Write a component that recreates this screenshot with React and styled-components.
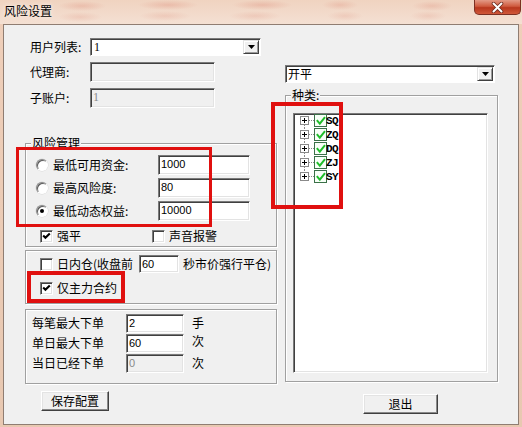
import React from 'react';
import styled, { createGlobalStyle } from 'styled-components';

const GlobalStyle = createGlobalStyle`
  *, *::before, *::after { box-sizing: border-box; }
  html, body { margin: 0; padding: 0; background: #fff; }
  body {
    font-family: "Noto Sans CJK SC", "Liberation Sans", sans-serif;
    font-size: 12px;
    color: #000;
  }
`;

const blob = (x, y, w, a) =>
  `radial-gradient(ellipse ${w}px 5px at ${x}px ${y}px, rgba(212, 104, 84, ${a}), transparent)`;

const Window = styled.div`
  position: relative;
  width: 522px;
  height: 427px;
  display: flex;
  flex-direction: column;
  background: linear-gradient(to bottom, #efcfba, #e8c8b1);
`;

const TitleBar = styled.div`
  height: 24px;
  flex-shrink: 0;
  display: flex;
  justify-content: space-between;
  align-items: flex-start;
  padding-left: 4px;
  background: ${[
    blob(82, 6, 24, 0.22),
    blob(80, 17, 22, 0.16),
    blob(168, 5, 30, 0.24),
    blob(165, 16, 26, 0.16),
    blob(262, 5, 30, 0.24),
    blob(255, 16, 26, 0.16),
    blob(340, 5, 18, 0.2),
    blob(345, 16, 18, 0.15),
    blob(432, 6, 20, 0.2),
    blob(428, 16, 18, 0.15),
  ].join(', ')}, linear-gradient(to bottom, #f0d3c0, #f4e0d3);
`;

const Title = styled.div`
  padding-top: 3px;
  line-height: 16px;
  font-size: 12px;
  text-shadow: 0 0 5px rgba(255, 255, 255, 0.9);
`;

const CloseButton = styled.div`
  width: 47px;
  height: 15px;
  margin-right: 1px;
  display: flex;
  align-items: center;
  justify-content: center;
  border: 1px solid #7c2f22;
  border-top: none;
  border-radius: 0 0 5px 5px;
  background: linear-gradient(to bottom, #e39a86 0%, #cf5a3e 45%, #b8371d 55%, #d0583a 100%);
`;

const Client = styled.div`
  flex: 1;
  margin: 0 3px 2px 3px;
  border: 1px solid #8f7d72;
  background: #f0f0f0;
  display: flex;
  gap: 7px;
  padding: 13px 0 0 21px;
`;

const Column = styled.div`
  width: ${p => p.$w}px;
  display: flex;
  flex-direction: column;
  align-items: flex-start;
`;

const Row = styled.div`
  display: flex;
  align-items: center;
  height: ${p => p.$h}px;
  margin-top: ${p => p.$mt || 0}px;
  padding-left: ${p => p.$pl || 0}px;
  flex-shrink: 0;
`;

const Label = styled.span`
  width: ${p => (p.$w ? `${p.$w}px` : 'auto')};
  padding-left: ${p => p.$pl || 0}px;
  margin-left: ${p => p.$ml || 0}px;
  line-height: 14px;
  white-space: nowrap;
  flex-shrink: 0;
`;

const TextBox = styled.div`
  width: ${p => p.$w}px;
  height: ${p => p.$h}px;
  margin-left: ${p => p.$ml || 0}px;
  flex-shrink: 0;
  background: ${p => (p.$disabled ? '#f0f0f0' : '#fff')};
  color: ${p => (p.$disabled ? '#8a8a8a' : '#000')};
  border: 1px solid;
  border-color: #7a7a7a #fff #fff #7a7a7a;
  box-shadow: inset 1px 1px 0 #404040, inset -1px -1px 0 #e3e3e3;
  font-family: ${p => (p.$serif ? '"Liberation Serif", serif' : '"Liberation Sans", sans-serif')};
  font-size: ${p => (p.$serif ? 12 : 11)}px;
  line-height: 13px;
  padding: 2px 0 0 2px;
`;

const Combo = styled.div`
  width: ${p => p.$w}px;
  height: 18px;
  margin: ${p => p.$m || 0};
  display: flex;
  background: #fff;
  border: 1px solid;
  border-color: #7a7a7a #fff #fff #7a7a7a;
  box-shadow: inset 1px 1px 0 #404040;
  flex-shrink: 0;
`;

const ComboText = styled.div`
  flex: 1;
  padding: 1px 0 0 ${p => p.$pl || 3}px;
  line-height: 14px;
  font-family: ${p => (p.$serif ? '"Liberation Serif", serif' : 'inherit')};
`;

const DropButton = styled.div`
  width: 16px;
  margin: 1px 1px 1px 0;
  display: flex;
  align-items: center;
  justify-content: center;
  background: #f0f0f0;
  border: 1px solid;
  border-color: #e3e3e3 #404040 #404040 #e3e3e3;
  box-shadow: inset 1px 1px 0 #fff, inset -1px -1px 0 #9a9a9a;
`;

const Frame = styled.div`
  width: ${p => (p.$w ? `${p.$w}px` : '100%')};
  height: ${p => p.$h}px;
  margin: ${p => p.$m || 0};
  display: flex;
  flex-direction: column;
  align-items: flex-start;
  border: 1px solid #a0a0a0;
  box-shadow: inset 1px 1px 0 #fff, 1px 1px 0 #fff;
  flex-shrink: 0;
`;

const Legend = styled.div`
  margin: -8px 0 0 5px;
  padding: 0 1px;
  height: 14px;
  line-height: 14px;
  background: #f0f0f0;
`;

const RadioDot = styled.span`
  position: relative;
  width: 12px;
  height: 12px;
  border-radius: 50%;
  background: #fff;
  border: 1px solid;
  border-color: #8a8a8a #fff #fff #8a8a8a;
  box-shadow: inset 1px 1px 0 #5a5a5a, 0 0 0 0.5px #d8d8d8;
  flex-shrink: 0;
  &::after {
    content: '';
    display: ${p => (p.$on ? 'block' : 'none')};
    position: absolute;
    left: 3px;
    top: 3px;
    width: 4px;
    height: 4px;
    border-radius: 50%;
    background: #000;
  }
`;

const CheckBox = styled.span`
  width: 13px;
  height: 13px;
  display: flex;
  align-items: center;
  justify-content: center;
  background: #fff;
  border: 1px solid;
  border-color: #7a7a7a #fff #fff #7a7a7a;
  box-shadow: inset 1px 1px 0 #404040, inset -1px -1px 0 #e3e3e3;
  flex-shrink: 0;
`;

const CheckItem = styled.div`
  display: flex;
  align-items: center;
  width: ${p => (p.$w ? `${p.$w}px` : 'auto')};
`;

const Unit = styled.span`
  margin-left: ${p => p.$ml}px;
  line-height: 14px;
  margin-top: ${p => p.$mt || 0}px;
`;

const Button = styled.div`
  width: ${p => p.$w}px;
  height: 20px;
  margin: ${p => p.$m};
  display: flex;
  align-items: center;
  justify-content: center;
  background: #f0f0f0;
  border: 1px solid;
  border-color: #fff #404040 #404040 #fff;
  box-shadow: inset -1px -1px 0 #8a8a8a, inset 1px 1px 0 #e3e3e3;
  line-height: 14px;
  flex-shrink: 0;
`;

const TreeBox = styled.div`
  width: 195px;
  height: 260px;
  margin: 11px 0 0 7px;
  background: #fff;
  border: 1px solid;
  border-color: #7a7a7a #fff #fff #7a7a7a;
  box-shadow: inset 1px 1px 0 #404040, inset -1px -1px 0 #e3e3e3;
`;

const TreeRow = styled.div`
  display: flex;
  align-items: center;
  height: 14px;
  padding-left: 6px;
`;

const TreeLabel = styled.span`
  margin-left: -1px;
  font-family: "Liberation Mono", monospace;
  font-weight: bold;
  font-size: 11px;
  line-height: 14px;
  letter-spacing: -0.5px;
`;

const Mark = styled.div`
  position: absolute;
  left: ${p => p.$x}px;
  top: ${p => p.$y}px;
  width: ${p => p.$w}px;
  height: ${p => p.$h}px;
  border: ${p => p.$b}px solid #e0100f;
  pointer-events: none;
`;

const Tick = () => (
  <svg width="9" height="9" viewBox="0 0 9 9">
    <path d="M1.2 3.6 L3.4 5.8 L7.8 1.4" fill="none" stroke="#000" strokeWidth="2.1" />
  </svg>
);

const Check = ({ on, children, w, gap = 4 }) => (
  <CheckItem $w={w}>
    <CheckBox>{on && <Tick />}</CheckBox>
    <Label $ml={gap}>{children}</Label>
  </CheckItem>
);

const Arrow = () => (
  <svg width="7" height="4" viewBox="0 0 7 4">
    <path d="M0 0 H7 L3.5 4 Z" fill="#000" />
  </svg>
);

const TreeGlyph = ({ first, last }) => (
  <svg width="27" height="14" viewBox="0 0 27 14">
    {!first && <line x1="4.5" y1="0" x2="4.5" y2="2" stroke="#8a8a8a" strokeDasharray="1 1" />}
    {!last && <line x1="4.5" y1="11" x2="4.5" y2="14" stroke="#8a8a8a" strokeDasharray="1 1" />}
    <rect x="0.5" y="2.5" width="8" height="8" fill="#fff" stroke="#8a8a8a" />
    <line x1="2" y1="6.5" x2="7" y2="6.5" stroke="#000" />
    <line x1="4.5" y1="4" x2="4.5" y2="9" stroke="#000" />
    <line x1="9" y1="6.5" x2="14" y2="6.5" stroke="#8a8a8a" strokeDasharray="1 1" />
    <rect x="14.5" y="0.5" width="12" height="12" fill="#f8fff8" stroke="#3a7048" />
    <path d="M16.8 6.2 L19.8 9.6 L25 3.2" fill="none" stroke="#1fbf2a" strokeWidth="2" />
  </svg>
);

const kinds = ['SQ', 'ZQ', 'DQ', 'ZJ', 'SY'];

const radios = [
  { label: '最低可用资金:', value: '1000' },
  { label: '最高风险度:', value: '80' },
  { label: '最低动态权益:', value: '10000', on: true },
];

const limits = [
  { label: '每笔最大下单', value: '2', unit: '手' },
  { label: '单日最大下单', value: '60', unit: '次', up: true },
  { label: '当日已经下单', value: '0', unit: '次', disabled: true },
];

const App = () => {
  return (
    <>
      <GlobalStyle />
      <Window>
        <TitleBar>
          <Title>风险设置</Title>
          <CloseButton>
            <svg width="13" height="11" viewBox="0 0 13 11">
              <path d="M2.5 1.5 L10.5 9.5 M10.5 1.5 L2.5 9.5" stroke="#6d2a1e" strokeWidth="3.6" strokeLinecap="round" />
              <path d="M2.5 1.5 L10.5 9.5 M10.5 1.5 L2.5 9.5" stroke="#fff" strokeWidth="2" strokeLinecap="round" />
            </svg>
          </CloseButton>
        </TitleBar>

        <Client>
          <Column $w={252}>
            <Row $h={18}>
              <Label $w={65} $pl={5}>用户列表:</Label>
              <Combo $w={171}>
                <ComboText $serif>1</ComboText>
                <DropButton><Arrow /></DropButton>
              </Combo>
            </Row>
            <Row $h={20} $mt={6}>
              <Label $w={65} $pl={5}>代理商:</Label>
              <TextBox $w={125} $h={20} $disabled />
            </Row>
            <Row $h={20} $mt={6}>
              <Label $w={65} $pl={5}>子账户:</Label>
              <TextBox $w={125} $h={20} $disabled $serif>1</TextBox>
            </Row>

            <Frame $h={104} $m="35px 0 0 0">
              <Legend>风险管理</Legend>
              {radios.map((r, i) => (
                <Row key={r.label} $h={20} $mt={i === 0 ? 5 : 3} $pl={10}>
                  <RadioDot $on={r.on} />
                  <Label $w={105} $ml={5}>{r.label}</Label>
                  <TextBox $w={92} $h={20}>{r.value}</TextBox>
                </Row>
              ))}
              <Row $h={14} $mt={8} $pl={14}>
                <Check on w={112}>强平</Check>
                <Check>声音报警</Check>
              </Row>
            </Frame>

            <Frame $h={54} $m="3px 0 0 0">
              <Row $h={18} $mt={4} $pl={14}>
                <CheckItem>
                  <CheckBox />
                  <Label $ml={4} $w={82}>日内仓(收盘前</Label>
                </CheckItem>
                <TextBox $w={40} $h={18}>60</TextBox>
                <Unit $ml={4}>秒市价强行平仓)</Unit>
              </Row>
              <Row $h={14} $mt={8} $pl={14}>
                <Check on>仅主力合约</Check>
              </Row>
            </Frame>

            <Frame $h={75} $m="5px 0 0 0">
              {limits.map((l, i) => (
                <Row key={l.label} $h={20} $mt={i === 0 ? 3 : 0}>
                  <Label $w={100} $pl={6}>{l.label}</Label>
                  <TextBox $w={58} $h={19} $disabled={l.disabled}>{l.value}</TextBox>
                  <Unit $ml={8} $mt={l.up ? -4 : 0}>{l.unit}</Unit>
                </Row>
              ))}
            </Frame>

            <Button $w={68} $m="7px 0 0 16px">保存配置</Button>
          </Column>

          <Column $w={214}>
            <Combo $w={210} $m="27px 0 0 1px">
              <ComboText $pl={2}>开平</ComboText>
              <DropButton><Arrow /></DropButton>
            </Combo>
            <Frame $w={213} $h={287} $m="12px 0 0 1px">
              <Legend>种类:</Legend>
              <TreeBox>
                {kinds.map((k, i) => (
                  <TreeRow key={k}>
                    <TreeGlyph first={i === 0} last={i === kinds.length - 1} />
                    <TreeLabel>{k}</TreeLabel>
                  </TreeRow>
                ))}
              </TreeBox>
            </Frame>
            <Button $w={75} $m="12px 0 0 79px">退出</Button>
          </Column>
        </Client>

        <Mark $x={16} $y={147} $w={196} $h={80} $b={3} />
        <Mark $x={271} $y={102} $w={72} $h={107} $b={4} />
        <Mark $x={27} $y={271} $w={98} $h={32} $b={4} />
      </Window>
    </>
  );
};

export default App;
